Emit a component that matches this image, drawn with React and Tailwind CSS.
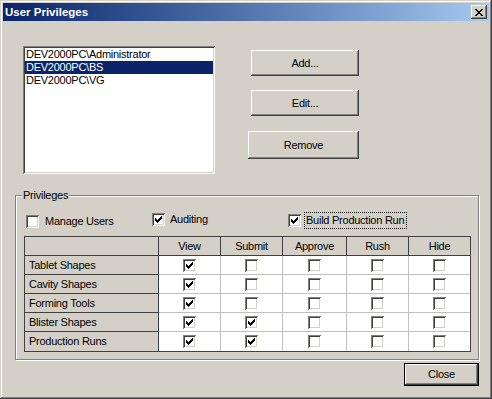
import React from "react";

const raised =
  "bg-[#d4d0c8] shadow-[inset_-1px_-1px_#404040,inset_1px_1px_#ffffff,inset_-2px_-2px_#808080,inset_2px_2px_#d4d0c8]";

function Check() {
  const cols = [
    [3, 5], [4, 6], [5, 7], [6, 6], [7, 5], [8, 4], [9, 3],
  ];
  return (
    <svg width="13" height="13" viewBox="0 0 13 13" className="absolute left-0 top-0" shapeRendering="crispEdges">
      {cols.map(([x, y]) => (
        <rect key={x} x={x} y={y} width="1" height="3" fill="#000" />
      ))}
    </svg>
  );
}

function Box({ checked }) {
  return (
    <div className="relative w-[13px] h-[13px] shrink-0 bg-white shadow-[inset_1px_1px_#808080,inset_-1px_-1px_#ffffff,inset_2px_2px_#404040,inset_-2px_-2px_#d4d0c8]">
      {checked && <Check />}
    </div>
  );
}

function Btn({ className, children }) {
  return (
    <div className={`${raised} flex items-center justify-center ${className}`}>
      {children}
    </div>
  );
}

function CloseGlyph() {
  const rows = [
    "##....##",
    ".##..##.",
    "..####..",
    "...##...",
    "..####..",
    ".##..##.",
    "##....##",
  ];
  const rects = [];
  rows.forEach((r, y) =>
    r.split("").forEach((c, x) => {
      if (c === "#") rects.push(<rect key={`${x}-${y}`} x={x} y={y} width="1" height="1" fill="#000" />);
    })
  );
  return (
    <svg width="8" height="7" viewBox="0 0 8 7" shapeRendering="crispEdges">
      {rects}
    </svg>
  );
}

const rows = [
  ["Tablet Shapes", [true, false, false, false, false]],
  ["Cavity Shapes", [true, false, false, false, false]],
  ["Forming Tools", [true, false, false, false, false]],
  ["Blister Shapes", [true, true, false, false, false]],
  ["Production Runs", [true, true, false, false, false]],
];
const headers = ["View", "Submit", "Approve", "Rush", "Hide"];

export default function App() {
  return (
    <div className="w-[492px] h-[399px] bg-[#d4d0c8] p-[3px] flex flex-col text-black text-[11px] leading-[13px] font-['Liberation_Sans',Arial,sans-serif] shadow-[inset_-1px_-1px_#404040,inset_1px_1px_#d4d0c8,inset_-2px_-2px_#808080,inset_2px_2px_#ffffff]">
      {/* Title bar */}
      <div className="h-[18px] flex items-center justify-between pl-[2px] pr-[2px] bg-gradient-to-r from-[#0a246a] to-[#a6caf0]">
        <span className="text-white font-bold text-[11.5px]">User Privileges</span>
        <div className={`${raised} w-[16px] h-[14px] flex items-center justify-center`}>
          <CloseGlyph />
        </div>
      </div>

      {/* Content */}
      <div className="flex flex-col pl-[12px] pt-[25px] tracking-[-0.25px]">
        <div className="flex pl-[8px]">
          <div className="w-[192px] h-[128px] bg-white p-[2px] shadow-[inset_1px_1px_#808080,inset_-1px_-1px_#ffffff,inset_2px_2px_#404040,inset_-2px_-2px_#d4d0c8]">
            <div className="h-[13px] pl-[1px] whitespace-nowrap">DEV2000PC\Administrator</div>
            <div className="h-[13px] pl-[1px] whitespace-nowrap bg-[#0a246a] text-white">DEV2000PC\BS</div>
            <div className="h-[13px] pl-[1px] whitespace-nowrap">DEV2000PC\VG</div>
          </div>
          <div className="ml-[33px] w-[111px] flex flex-col items-end">
            <Btn className="mt-[4px] w-[108px] h-[26px]">Add...</Btn>
            <Btn className="mt-[14px] w-[108px] h-[26px]">Edit...</Btn>
            <Btn className="mt-[15px] w-[111px] h-[28px]">Remove</Btn>
          </div>
        </div>

        {/* Group box */}
        <div className="relative mt-[21px] w-[464px] h-[165px] border border-[#808080] shadow-[inset_1px_1px_#ffffff,1px_1px_#ffffff]">
          <span className="absolute top-[-7px] left-[6px] px-[1px] bg-[#d4d0c8]">Privileges</span>
          <div className="flex items-start pt-[17px] pl-[10px]">
            <div className="w-[126px] flex items-center gap-[6px] mt-[2px]">
              <Box checked={false} />
              <span>Manage Users</span>
            </div>
            <div className="w-[136px] flex items-center gap-[5px]">
              <Box checked={true} />
              <span>Auditing</span>
            </div>
            <div className="flex items-center gap-[3px] -mt-[1px]">
              <Box checked={true} />
              <div className="w-[103px] h-[17px] border border-dotted border-black overflow-hidden whitespace-nowrap pl-[1px] leading-[15px]">
                Build Production Run
              </div>
            </div>
          </div>

          {/* Grid */}
          <div className="ml-[8px] mt-[7px] w-[447px] border border-[#404040] grid grid-cols-[134px_62px_62px_64px_62px_61px] grid-rows-[19px_19px_19px_19px_19px_19px]">
            <div className="bg-[#d4d0c8] border-r border-b border-[#404040]" />
            {headers.map((h, i) => (
              <div
                key={h}
                className={`bg-[#d4d0c8] border-b border-[#404040] flex items-center justify-center ${i < 4 ? "border-r" : ""}`}
              >
                {h}
              </div>
            ))}
            {rows.map(([label, vals], ri) => (
              <React.Fragment key={label}>
                <div
                  className={`bg-[#d4d0c8] border-r border-[#404040] flex items-center pl-[4px] ${ri < 4 ? "border-b" : ""}`}
                >
                  {label}
                </div>
                {vals.map((v, ci) => (
                  <div
                    key={ci}
                    className={`bg-white border-[#c0c0c0] flex items-center justify-center ${ci < 4 ? "border-r" : ""} ${ri < 4 ? "border-b" : ""}`}
                  >
                    <Box checked={v} />
                  </div>
                ))}
              </React.Fragment>
            ))}
          </div>
        </div>

        <div className="w-[464px] flex justify-end mt-[3px]">
          <div className="w-[75px] h-[23px] border border-black">
            <Btn className="w-full h-full">Close</Btn>
          </div>
        </div>
      </div>
    </div>
  );
}
